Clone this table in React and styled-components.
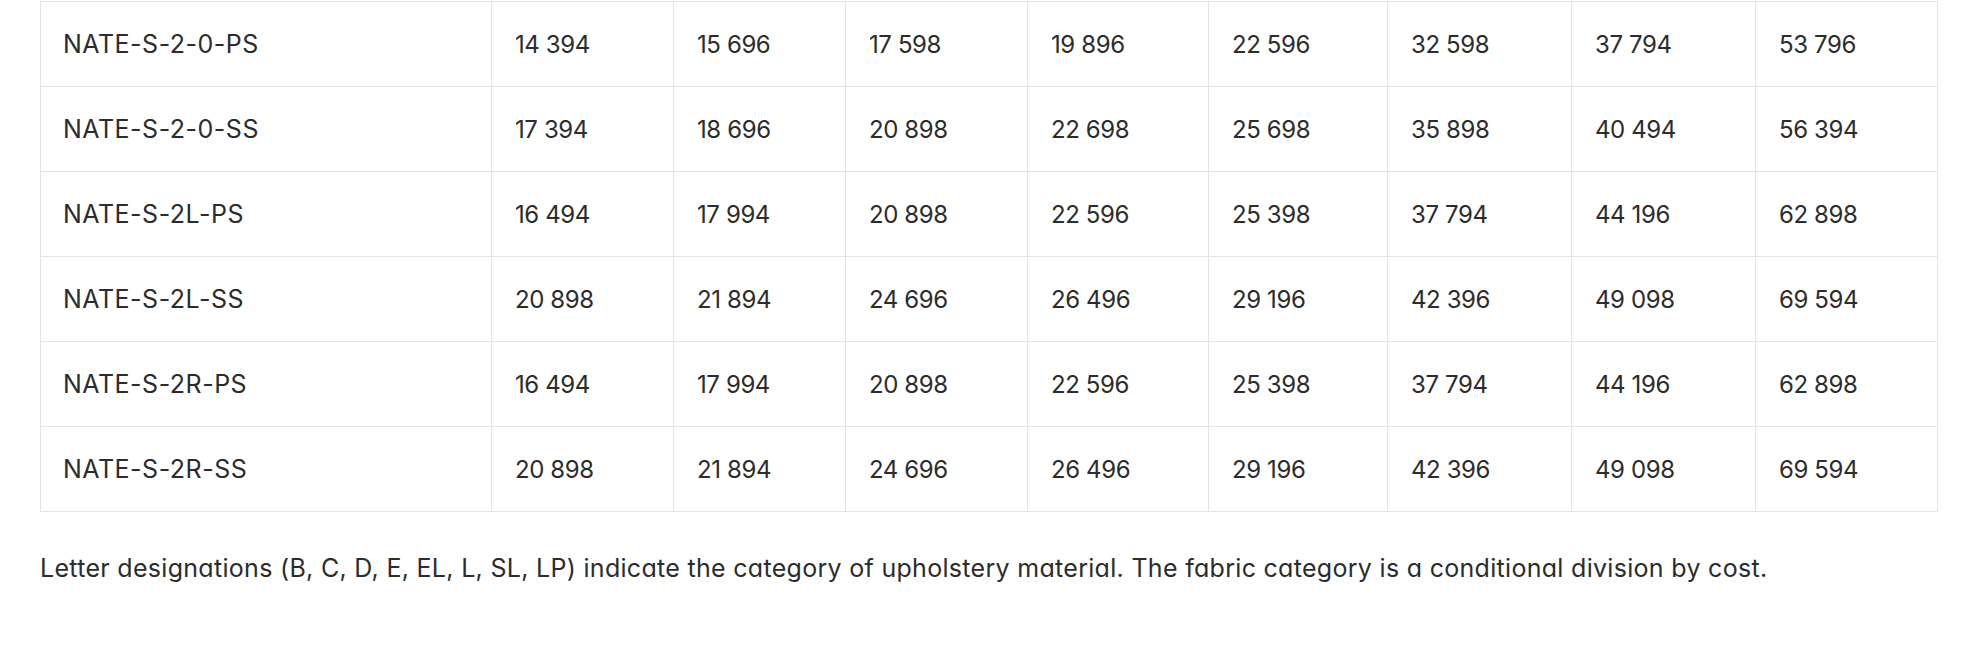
import styled, { createGlobalStyle } from 'styled-components';

const GlobalStyle = createGlobalStyle`
  html, body {
    margin: 0;
    padding: 0;
    background: #ffffff;
  }

  body {
    font-family: Inter, 'Liberation Sans', sans-serif;
    font-feature-settings: 'cv11';
    color: #2c2c2c;
  }
`;

const Page = styled.div`
  padding: 1px 39px 0 40px;
`;

const Table = styled.table`
  width: 1897px;
  border-collapse: collapse;
  table-layout: fixed;
`;

const Col = styled.col`
  width: ${(props) => props.width}px;
`;

const Row = styled.tr`
  height: 85px;
`;

const Cell = styled.td`
  border: 1px solid #e3e3e3;
  padding: 0 0 0 ${(props) => (props.first ? 22 : 23)}px;
  font-size: ${(props) => (props.first ? 25 : 24)}px;
  font-weight: 400;
  letter-spacing: ${(props) => (props.first ? '0.5px' : '-0.4px')};
  color: #2c2c2c;
  vertical-align: middle;
  white-space: nowrap;
`;

const Note = styled.p`
  margin: 40px 0 0;
  font-size: 25px;
  line-height: 32px;
  color: #2c2c2c;
  letter-spacing: 0.3px;
`;

const widths = [451, 182, 172, 182, 181, 179, 184, 184, 182];

const rows = [
  ['NATE-S-2-0-PS', '14 394', '15 696', '17 598', '19 896', '22 596', '32 598', '37 794', '53 796'],
  ['NATE-S-2-0-SS', '17 394', '18 696', '20 898', '22 698', '25 698', '35 898', '40 494', '56 394'],
  ['NATE-S-2L-PS', '16 494', '17 994', '20 898', '22 596', '25 398', '37 794', '44 196', '62 898'],
  ['NATE-S-2L-SS', '20 898', '21 894', '24 696', '26 496', '29 196', '42 396', '49 098', '69 594'],
  ['NATE-S-2R-PS', '16 494', '17 994', '20 898', '22 596', '25 398', '37 794', '44 196', '62 898'],
  ['NATE-S-2R-SS', '20 898', '21 894', '24 696', '26 496', '29 196', '42 396', '49 098', '69 594']
];

const App = () => (
  <Page>
    <GlobalStyle />
    <Table>
      <colgroup>
        {widths.map((w, i) => (
          <Col key={i} width={w} />
        ))}
      </colgroup>
      <tbody>
        {rows.map((row) => (
          <Row key={row[0]}>
            {row.map((value, i) => (
              <Cell key={i} first={i === 0}>
                {value}
              </Cell>
            ))}
          </Row>
        ))}
      </tbody>
    </Table>
    <Note>
      Letter designations (B, C, D, E, EL, L, SL, LP) indicate the category of upholstery material. The fabric
      category is a conditional division by cost.
    </Note>
  </Page>
);

export default App;
